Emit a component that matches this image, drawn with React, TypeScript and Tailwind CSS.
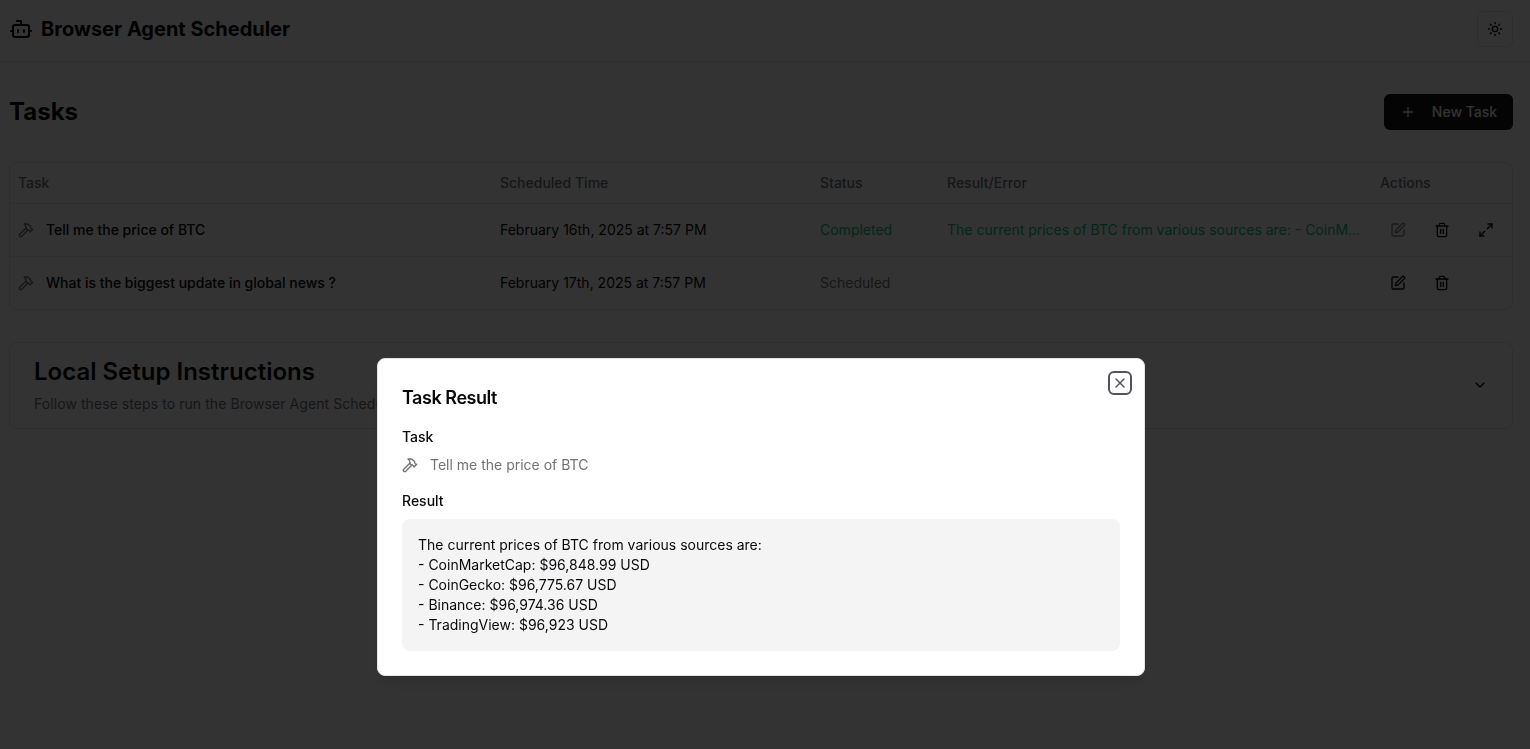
import { Bot, ChevronDown, Hammer, Maximize2, Plus, SquarePen, Sun, Trash2, X } from "lucide-react";

const rowClass = "grid grid-cols-[482px_320px_127px_433px_140px] items-center";

function TaskRow({
  task,
  time,
  status,
  result,
  done,
}: {
  task: string;
  time: string;
  status: string;
  result?: string;
  done?: boolean;
}) {
  return (
    <div className={`${rowClass} h-[53px] border-t border-[#e4e4e7] text-sm`}>
      <div className="flex items-center gap-3 px-2">
        <Hammer className="w-4 h-4 text-[#71717a]" />
        <span className="font-medium">{task}</span>
      </div>
      <div className="px-2">{time}</div>
      <div className={`px-2 ${done ? "text-[#10b981]" : "text-[#71717a]"}`}>{status}</div>
      <div className="px-2 truncate text-[#10b981]">{result}</div>
      <div className="flex items-center pl-[18px]">
        <div className="w-11 flex">
          <SquarePen className={`w-4 h-4 ${done ? "opacity-50" : ""}`} />
        </div>
        <div className="w-11 flex">
          <Trash2 className="w-4 h-4" />
        </div>
        {done && <Maximize2 className="w-4 h-4" />}
      </div>
    </div>
  );
}

export default function App() {
  return (
    <div className="min-h-[749px] bg-white text-[#09090b] font-['Inter',sans-serif]">
      <header className="h-[62px] border-b border-[#e4e4e7] pl-[9px] pr-[17px] pb-[3px] flex items-center justify-between">
        <div className="flex items-center gap-2">
          <Bot className="w-6 h-6" />
          <h1 className="text-xl font-bold">Browser Agent Scheduler</h1>
        </div>
        <button className="w-9 h-9 border border-[#e4e4e7] rounded-md flex items-center justify-center">
          <Sun className="w-4 h-4" />
        </button>
      </header>

      <main className="pl-[9px] pr-[17px]">
        <div className="flex items-center justify-between pt-8 pb-8">
          <h2 className="text-2xl font-bold">Tasks</h2>
          <button className="h-9 w-[129px] bg-[#18181b] text-[#fafafa] rounded-md text-sm font-medium flex items-center justify-center gap-4">
            <Plus className="w-4 h-4" />
            New Task
          </button>
        </div>

        <div className="border border-[#e4e4e7] rounded-lg">
          <div className={`${rowClass} h-10 text-sm font-medium text-[#71717a]`}>
            <div className="px-2">Task</div>
            <div className="px-2">Scheduled Time</div>
            <div className="px-2">Status</div>
            <div className="px-2">Result/Error</div>
            <div className="px-2">Actions</div>
          </div>
          <TaskRow
            task="Tell me the price of BTC"
            time="February 16th, 2025 at 7:57 PM"
            status="Completed"
            result="The current prices of BTC from various sources are: - CoinMarketCap: $96,848.99 USD"
            done
          />
          <TaskRow
            task="What is the biggest update in global news ?"
            time="February 17th, 2025 at 7:57 PM"
            status="Scheduled"
          />
        </div>

        <div className="mt-8 h-[87px] border border-[#e4e4e7] rounded-lg pl-6 pr-6 pt-[13px] flex justify-between">
          <div>
            <h3 className="text-2xl font-semibold leading-8">Local Setup Instructions</h3>
            <p className="mt-[6px] text-sm leading-5 tracking-[0.07px] text-[#71717a]">
              Follow these steps to run the Browser Agent Scheduler locally on your machine
            </p>
          </div>
          <ChevronDown className="w-4 h-4 mt-[21px]" />
        </div>
      </main>

      {/* dialog */}
      <div className="fixed inset-0 bg-black/80" />
      <div className="fixed left-[377px] top-[358px] w-[768px] h-[318px] bg-white rounded-lg border border-[#e4e4e7] shadow-lg px-6 pt-[25px]">
        <button className="absolute right-3 top-3 w-6 h-6 flex items-center justify-center rounded-md border-2 border-[#52525b] text-[#52525b]">
          <X className="w-4 h-4" />
        </button>
        <h2 className="text-lg font-semibold leading-7 tracking-tight">Task Result</h2>
        <div className="mt-[15px] text-sm font-medium leading-5">Task</div>
        <div className="mt-2 flex items-center gap-3 text-sm text-[#71717a]">
          <Hammer className="w-4 h-4" />
          <span>Tell me the price of BTC</span>
        </div>
        <div className="mt-4 text-sm font-medium leading-5">Result</div>
        <div className="mt-2 h-[132px] rounded-lg bg-[#f4f4f5] p-4 text-sm leading-5">
          The current prices of BTC from various sources are:
          <br />- CoinMarketCap: $96,848.99 USD
          <br />- CoinGecko: $96,775.67 USD
          <br />- Binance: $96,974.36 USD
          <br />- TradingView: $96,923 USD
        </div>
      </div>
    </div>
  );
}
